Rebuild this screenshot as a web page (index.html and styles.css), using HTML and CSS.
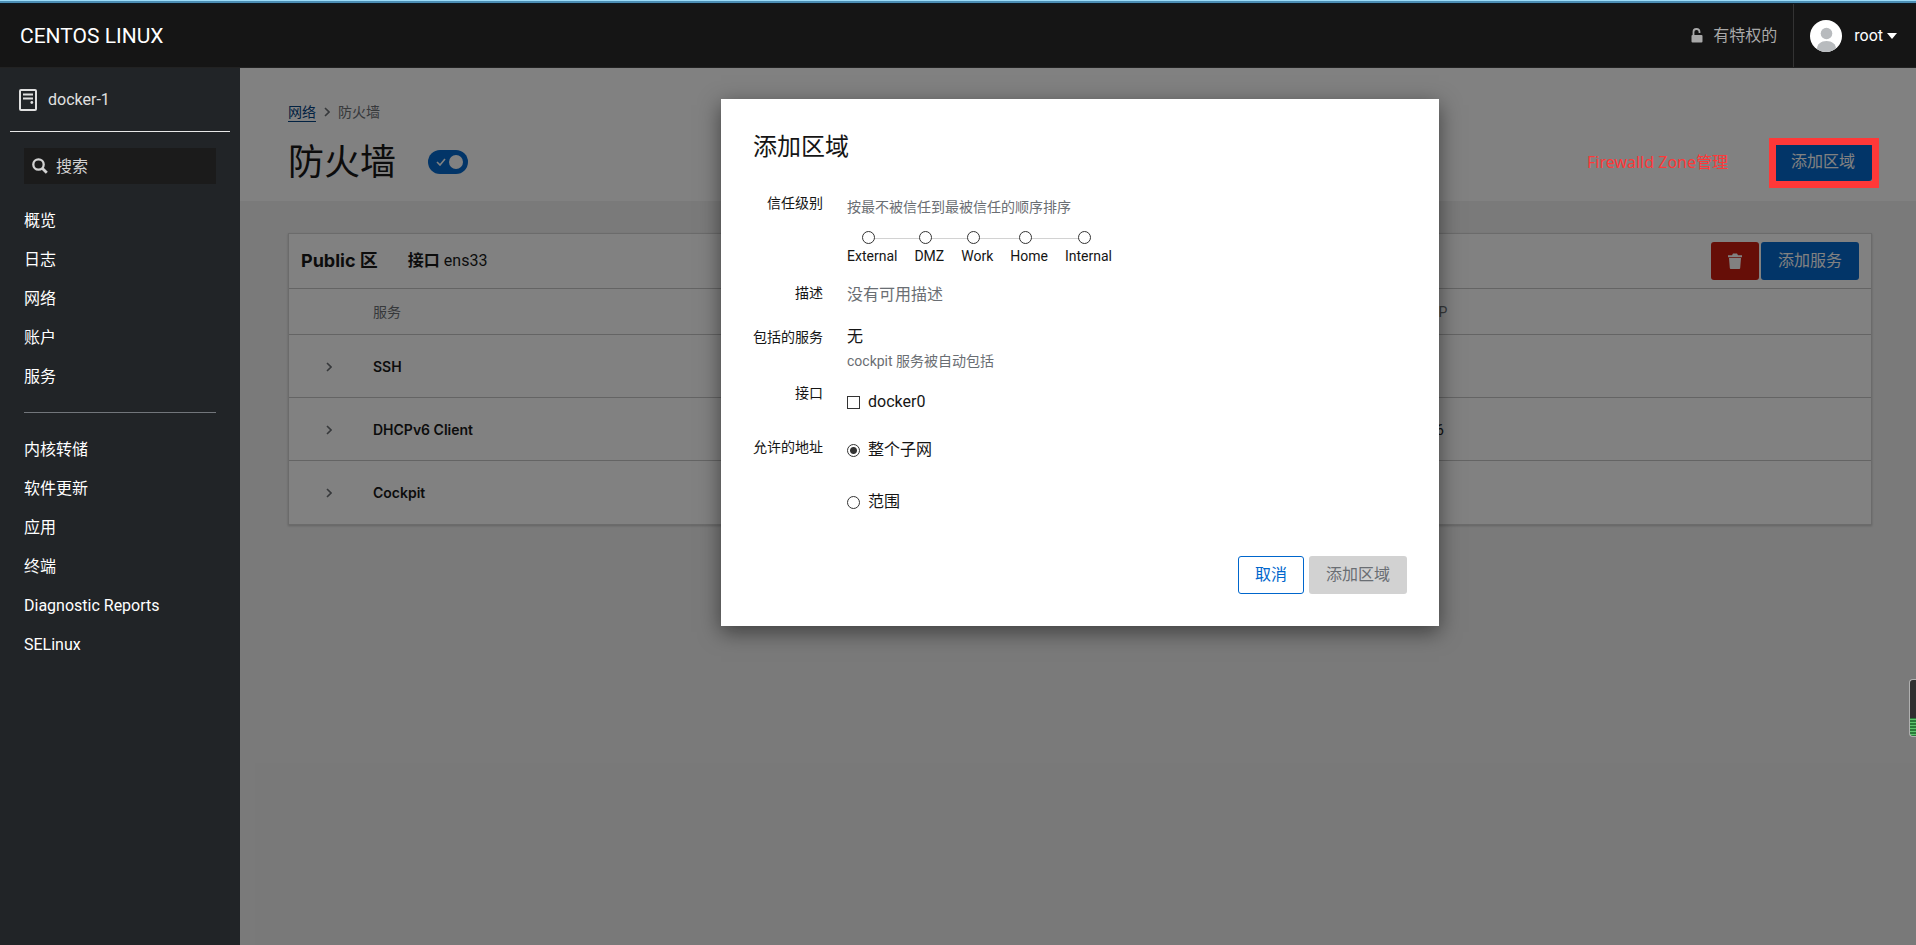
FILE: index.html
```html
<!DOCTYPE html>
<html lang="zh-CN">
<head>
    <meta charset="UTF-8">
    <meta name="viewport" content="width=device-width, initial-scale=1.0">
    <title>防火墙 - docker-1</title>
    <link rel="stylesheet" href="styles.css">
</head>
<body>
    <header class="topbar">
        <span class="brand">CENTOS LINUX</span>
        <div class="topbar-right">
            <button type="button" class="privileged">
                <svg width="12" height="15" viewBox="0 0 12 15"><path d="M2.500 7V4.200a3 3 0 0 1 6-.4V5" fill="none" stroke="currentColor" stroke-width="1.800"/><rect x="0.500" y="7" width="11" height="7.500" rx="1" fill="currentColor"/></svg>
                有特权的
            </button>
            <button type="button" class="user-menu">
                <svg width="32" height="32" viewBox="0 0 32 32"><defs><clipPath id="face"><circle cx="16" cy="16" r="16"/></clipPath></defs><circle cx="16" cy="16" r="16" fill="#fff"/><g clip-path="url(#face)" fill="#b8bbbe"><circle cx="16.500" cy="13.500" r="5.800"/><path d="M7 32v-3c0-5 4-8 9.500-8s9.500 3 9.500 8v3z"/></g></svg>
                <span>root</span>
                <svg width="10" height="6" viewBox="0 0 10 6"><path d="M0 0h10L5 6z" fill="currentColor"/></svg>
            </button>
        </div>
    </header>

    <div class="layout">
        <nav class="sidebar">
            <a href="#" class="host">
                <svg width="18" height="22" viewBox="0 0 18 22" fill="none" stroke="currentColor"><rect x="1" y="1" width="16" height="20" rx="1" stroke-width="2"/><path d="M4 5.500h10M4 9.500h10" stroke-width="2"/><circle cx="12.800" cy="13.500" r="1.400" fill="currentColor" stroke="none"/></svg>
                docker-1
            </a>
            <div class="search">
                <svg width="16" height="16" viewBox="0 0 16 16" fill="none" stroke="currentColor"><circle cx="6.500" cy="6.500" r="5.200" stroke-width="2.300"/><path d="M10.200 10.200l4.600 4.600" stroke-width="2.800"/></svg>
                <input type="text" placeholder="搜索" aria-label="搜索">
            </div>
            <ul class="menu">
                <li><a href="#">概览</a></li>
                <li><a href="#">日志</a></li>
                <li><a href="#">网络</a></li>
                <li><a href="#">账户</a></li>
                <li><a href="#">服务</a></li>
            </ul>
            <ul class="menu menu-tools">
                <li><a href="#">内核转储</a></li>
                <li><a href="#">软件更新</a></li>
                <li><a href="#">应用</a></li>
                <li><a href="#">终端</a></li>
                <li><a href="#">Diagnostic Reports</a></li>
                <li><a href="#">SELinux</a></li>
            </ul>
        </nav>

        <main class="content">
            <section class="page-header">
                <div class="breadcrumb">
                    <a href="#">网络</a>
                    <svg width="6" height="10" viewBox="0 0 6 10"><path d="M1 1l4 4-4 4" fill="none" stroke="currentColor" stroke-width="1.600"/></svg>
                    <span>防火墙</span>
                </div>
                <div class="title-row">
                    <h1>防火墙</h1>
                    <label class="switch">
                        <input type="checkbox" aria-label="防火墙" checked>
                        <svg width="10" height="8" viewBox="0 0 10 8"><path d="M1 4l3 3 5-6" fill="none" stroke="currentColor" stroke-width="1.600"/></svg>
                    </label>
                    <span class="note">Firewalld Zone管理</span>
                    <div class="marked">
                        <button type="button" class="btn btn-primary">添加区域</button>
                    </div>
                </div>
            </section>

            <section class="zone">
                <div class="zone-header">
                    <h2>Public 区</h2>
                    <span class="zone-if"><strong>接口</strong> ens33</span>
                    <div class="zone-actions">
                        <button type="button" class="btn btn-danger" aria-label="删除">
                            <svg width="14" height="16" viewBox="0 0 14 16" fill="currentColor"><path d="M0 2.200h4L5 0.500h4l1 1.700h4v2H0z"/><path d="M1 5h12l-.8 10a1 1 0 0 1-1 1H2.800a1 1 0 0 1-1-1z"/></svg>
                        </button>
                        <button type="button" class="btn btn-primary">添加服务</button>
                    </div>
                </div>
                <table class="services">
                    <thead>
                        <tr><th class="col-toggle"></th><th>服务</th><th class="col-udp">UDP</th></tr>
                    </thead>
                    <tbody>
                        <tr>
                            <td><button type="button" class="expand" aria-label="SSH"><svg width="6" height="10" viewBox="0 0 6 10"><path d="M1 1l4 4-4 4" fill="none" stroke="currentColor" stroke-width="1.600"/></svg></button></td>
                            <th scope="row">SSH</th><td></td>
                        </tr>
                        <tr>
                            <td><button type="button" class="expand" aria-label="DHCPv6 Client"><svg width="6" height="10" viewBox="0 0 6 10"><path d="M1 1l4 4-4 4" fill="none" stroke="currentColor" stroke-width="1.600"/></svg></button></td>
                            <th scope="row">DHCPv6 Client</th><td>546</td>
                        </tr>
                        <tr>
                            <td><button type="button" class="expand" aria-label="Cockpit"><svg width="6" height="10" viewBox="0 0 6 10"><path d="M1 1l4 4-4 4" fill="none" stroke="currentColor" stroke-width="1.600"/></svg></button></td>
                            <th scope="row">Cockpit</th><td></td>
                        </tr>
                    </tbody>
                </table>
            </section>

            <div class="backdrop">
                <form class="dialog" role="dialog" aria-labelledby="dialog-title">
                    <h2 id="dialog-title">添加区域</h2>
                    <div class="fields">
                        <span class="field-label">信任级别</span>
                        <div class="field trust" role="radiogroup" aria-label="信任级别">
                            <p class="hint">按最不被信任到最被信任的顺序排序</p>
                            <div class="levels">
                                <label><input type="radio" name="zone">External</label>
                                <label><input type="radio" name="zone">DMZ</label>
                                <label><input type="radio" name="zone">Work</label>
                                <label><input type="radio" name="zone">Home</label>
                                <label><input type="radio" name="zone">Internal</label>
                            </div>
                        </div>

                        <span class="field-label">描述</span>
                        <p class="field description">没有可用描述</p>

                        <span class="field-label">包括的服务</span>
                        <div class="field">
                            <p>无</p>
                            <p class="hint">cockpit 服务被自动包括</p>
                        </div>

                        <span class="field-label">接口</span>
                        <div class="field options interfaces">
                            <label><input type="checkbox" name="interface">docker0</label>
                        </div>

                        <span class="field-label">允许的地址</span>
                        <div class="field options addresses" role="radiogroup" aria-label="允许的地址">
                            <label><input type="radio" name="source" checked>整个子网</label>
                            <label><input type="radio" name="source">范围</label>
                        </div>
                    </div>
                    <div class="dialog-footer">
                        <button type="button" class="btn btn-secondary">取消</button>
                        <button type="submit" class="btn" disabled>添加区域</button>
                    </div>
                </form>
            </div>
        </main>
    </div>

    <div class="meter"></div>
</body>
</html>
```

FILE: styles.css
```css
* {
    box-sizing: border-box;
}

body {
    margin: 0;
    min-height: 100vh;
    display: flex;
    flex-direction: column;
    font-family: Roboto, "Noto Sans CJK SC", sans-serif;
    font-size: 16px;
    line-height: 24px;
    color: #151515;
    overflow: hidden;
}

h1, h2, p, ul {
    margin: 0;
    padding: 0;
    font-weight: 400;
}

a {
    color: inherit;
    text-decoration: none;
}

button, input {
    font: inherit;
    color: inherit;
}

button {
    border: none;
    background: none;
    cursor: pointer;
}

svg {
    flex: none;
}

/* top bar */
.topbar {
    height: 68px;
    padding: 4px 19px 0 20px;
    display: flex;
    align-items: center;
    justify-content: space-between;
    background: linear-gradient(#9cdcf8 1px, #4c8fb5 1px, #4c8fb5 3px, #0c1a26 3px, #151515 5px);
    border-bottom: 1px solid #222;
    color: #fff;
}

.brand {
    font-size: 21px;
}

.topbar-right {
    display: flex;
    align-self: stretch;
}

.privileged {
    display: flex;
    align-items: center;
    gap: 10px;
    padding: 0 16px;
    border-right: 1px solid #333;
    color: #a8a8a8;
}

.user-menu {
    display: flex;
    align-items: center;
    padding: 0 0 0 16px;
}

.user-menu span {
    margin: 0 4px 0 12px;
}

/* navigation */
.layout {
    flex: 1;
    display: flex;
}

.sidebar {
    width: 240px;
    flex: none;
    background: #212427;
    color: #fff;
}

.host {
    display: flex;
    align-items: center;
    gap: 11px;
    margin: 0 10px;
    padding: 20px 8px 19px 9px;
    border-bottom: 1px solid #e8e8e8;
    color: #e0e0e0;
}

.search {
    display: flex;
    align-items: center;
    gap: 8px;
    height: 36px;
    margin: 16px 24px 17px;
    padding: 0 8px;
    background: #1b1b1b;
    color: #d2d2d2;
}

.search input {
    min-width: 0;
    flex: 1;
    padding: 1px 0 0;
    border: none;
    background: none;
    outline: none;
}

.search input::placeholder {
    color: #d2d2d2;
}

.menu {
    list-style: none;
    margin: 0 24px;
}

.menu a {
    display: block;
    padding: 8px 0 7px;
}

.menu-tools {
    margin-top: 16px;
    padding-top: 17px;
    border-top: 1px solid #72767b;
}

/* page */
.content {
    position: relative;
    flex: 1;
    background: #f0f0f0;
}

.page-header {
    height: 133px;
    padding: 32px 44px 0 48px;
    background: #fff;
}

.breadcrumb {
    display: flex;
    align-items: center;
    gap: 8px;
    font-size: 14px;
    color: #6a6e73;
}

.breadcrumb a {
    line-height: 18px;
    color: #004080;
    border-bottom: 1px solid #004080;
}

.title-row {
    display: flex;
    align-items: center;
    margin-top: 14px;
}

h1 {
    padding-top: 2px;
    font-size: 36px;
    line-height: 46px;
}

.switch {
    position: relative;
    display: flex;
    align-items: center;
    width: 40px;
    height: 24px;
    margin-left: 32px;
    padding-left: 8px;
    border-radius: 12px;
    background: #06c;
    color: #fff;
}

.switch input {
    position: absolute;
    top: 5px;
    right: 5px;
    appearance: none;
    width: 14px;
    height: 14px;
    margin: 0;
    border-radius: 50%;
    background: #fff;
}

.note {
    position: relative;
    z-index: 2;
    margin-left: auto;
    color: #ff3838;
    font-family: "Noto Sans", "Noto Sans CJK SC", sans-serif;
}

.marked {
    position: relative;
    margin-left: 46px;
}

.marked::after {
    content: "";
    position: absolute;
    z-index: 2;
    inset: -5px -7px -7px -5px;
    border: 7px solid #ff3838;
}

.btn {
    display: inline-flex;
    align-items: center;
    justify-content: center;
    height: 38px;
    padding: 0 16px;
    border: 1px solid transparent;
    border-radius: 3px;
}

.btn-primary {
    background: #06c;
    color: #fff;
}

.btn-danger {
    background: #c9190b;
    color: #fff;
}

.btn-secondary {
    border-color: #06c;
    color: #06c;
}

.btn:disabled {
    background: #d2d2d2;
    color: #6a6e73;
}

/* zone card */
.zone {
    margin: 32px 44px 0 48px;
    background: #fff;
    border: 1px solid #d2d2d2;
    box-shadow: 0 1px 2px rgba(3, 3, 3, 0.2);
}

.zone-header {
    display: flex;
    align-items: center;
    height: 54px;
    padding: 0 12px;
}

.zone-header h2 {
    font-family: Inter, "Noto Sans CJK SC", sans-serif;
    font-size: 18px;
    font-weight: 700;
}

.zone-if {
    margin-left: 30px;
}

.zone-actions {
    display: flex;
    gap: 2px;
    margin-left: auto;
}

.services {
    width: 100%;
    border-collapse: collapse;
    table-layout: fixed;
    font-size: 14px;
    text-align: left;
}

.services th,
.services td {
    height: 63px;
    padding: 2px 0 0;
    border-top: 1px solid #c4c4c4;
}

.services thead th {
    height: 46px;
    padding: 0;
    font-weight: 400;
    color: #6a6e73;
}

.services tbody th {
    font-family: Inter, "Noto Sans CJK SC", sans-serif;
    font-weight: 600;
}

.services tr > :last-child {
    padding-left: 8px;
}

.services .col-toggle {
    width: 84px;
}

.services .col-udp {
    width: 29%;
}

.expand {
    padding: 0 8px;
    margin-left: 29px;
    color: #6a6e73;
}

/* dialog */
.backdrop {
    position: absolute;
    z-index: 1;
    inset: 0;
    display: flex;
    align-items: flex-start;
    justify-content: center;
    padding-top: 31px;
    background: rgba(3, 3, 3, 0.5);
}

.dialog {
    width: 718px;
    padding: 32px;
    margin-left: 4px;
    background: #fff;
    box-shadow: 0 6px 20px rgba(3, 3, 3, 0.5);
}

.dialog h2 {
    font-size: 24px;
    line-height: 32px;
}

.fields {
    display: grid;
    grid-template-columns: auto 1fr;
    gap: 8px 24px;
    margin-top: 28px;
}

.field-label {
    font-size: 14px;
    text-align: right;
}

.hint {
    font-size: 14px;
    color: #6a6e73;
}

.trust {
    padding: 4px 0 8px;
}

.description {
    padding: 2px 0 10px;
    color: #6a6e73;
}

/* trust levels joined by one line */
.levels {
    position: relative;
    display: flex;
    gap: 17px;
    width: fit-content;
    margin-top: 12px;
    font-size: 14px;
    line-height: 18px;
}

.levels::before {
    content: "";
    position: absolute;
    top: 7px;
    left: 24px;
    right: 28px;
    height: 1px;
    background: #d2d2d2;
}

.levels label {
    display: flex;
    flex-direction: column;
    align-items: center;
    gap: 3px;
}

.field input {
    appearance: none;
    position: relative;
    width: 13px;
    height: 13px;
    margin: 0;
    border: 1px solid #333;
    background: #fff;
}

.field input[type="radio"] {
    border-radius: 50%;
}

.field .levels input {
    margin-right: 8px;
}

.field input:checked {
    background: radial-gradient(circle, #333 3px, #fff 4px);
}

.options {
    display: flex;
    flex-direction: column;
    align-items: flex-start;
    gap: 28px;
}

.options label {
    display: flex;
    align-items: center;
    gap: 8px;
}

.interfaces {
    padding: 9px 0 13px;
}

.addresses {
    padding-top: 3px;
}

.dialog-footer {
    display: flex;
    justify-content: flex-end;
    gap: 5px;
    margin-top: 42px;
}

/* audio meter at the window edge */
.meter {
    position: absolute;
    z-index: 3;
    right: 0;
    top: 679px;
    width: 7px;
    height: 58px;
    border: 1px solid #b0b0b0;
    border-right: none;
    border-radius: 4px 0 0 4px;
    background: linear-gradient(#303030 38px, transparent 38px), repeating-linear-gradient(#5fc56f 0 1px, #2a7a3a 1px 3px);
}
```
